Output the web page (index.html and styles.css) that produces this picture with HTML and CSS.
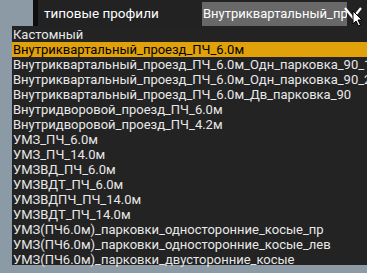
FILE: index.html
```html
<!DOCTYPE html>
<html lang="ru">
<head>
    <meta charset="UTF-8">
    <title>Типовые профили</title>
    <link rel="stylesheet" href="styles.css">
</head>
<body>
    <div class="toolbar">
        <div class="edge"></div>
        <span class="label">типовые профили</span>
        <div class="combo">
            <span class="combo-text">Внутриквартальный_проезд_ПЧ_6.0м</span>
            <svg class="chevron" width="20" height="20" viewBox="0 0 20 20">
                <path d="M2 5 L10 15 L18 5" fill="none" stroke="#ffffff" stroke-width="2.2"/>
                <path d="M10 8 L10 21 L13 18 L15.5 23 L17.5 22 L15 17 L19 17 Z" fill="#ffffff" stroke="#000000" stroke-width="1"/>
            </svg>
        </div>
    </div>

    <ul class="list">
        <li>Кастомный</li>
        <li class="selected">Внутриквартальный_проезд_ПЧ_6.0м</li>
        <li>Внутриквартальный_проезд_ПЧ_6.0м_Одн_парковка_90_1</li>
        <li>Внутриквартальный_проезд_ПЧ_6.0м_Одн_парковка_90_2</li>
        <li>Внутриквартальный_проезд_ПЧ_6.0м_Дв_парковка_90</li>
        <li>Внутридворовой_проезд_ПЧ_6.0м</li>
        <li>Внутридворовой_проезд_ПЧ_4.2м</li>
        <li>УМЗ_ПЧ_6.0м</li>
        <li>УМЗ_ПЧ_14.0м</li>
        <li>УМЗВД_ПЧ_6.0м</li>
        <li>УМЗВДТ_ПЧ_6.0м</li>
        <li>УМЗВДПЧ_ПЧ_14.0м</li>
        <li>УМЗВДТ_ПЧ_14.0м</li>
        <li>УМЗ(ПЧ6.0м)_парковки_односторонние_косые_пр</li>
        <li>УМЗ(ПЧ6.0м)_парковки_односторонние_косые_лев</li>
        <li>УМЗ(ПЧ6.0м)_парковки_двусторонние_косые</li>
    </ul>
</body>
</html>
```
FILE: styles.css
```css
* {
    margin: 0;
    padding: 0;
    box-sizing: border-box;
}

body {
    width: 367px;
    height: 273px;
    overflow: hidden;
    background-color: #8c9aa6;
    font-family: Roboto, "Noto Sans", sans-serif;
    font-size: 13px;
    color: #ffffff;
}

.toolbar {
    display: flex;
    align-items: center;
    height: 26px;
    margin-left: 33px;
    background-color: #222222;
}

.edge {
    width: 5px;
    height: 100%;
    background-color: #0e0e0e;
}

.label {
    margin-left: 6px;
    width: 158px;
    font-size: 13.5px;
}

.combo {
    display: flex;
    align-items: center;
    height: 24px;
    margin-top: 2px;
    flex: 1;
}

.combo-text {
    background-color: #686868;
    height: 24px;
    line-height: 24px;
    width: 145px;
    padding-left: 1px;
    overflow: hidden;
    white-space: nowrap;
}

.chevron {
    margin-left: -4px;
    margin-top: -2px;
    overflow: visible;
}

.list {
    list-style: none;
    margin-left: 12px;
    height: 239px;
    background-color: #232323;
    padding-top: 1px;
}

.list li {
    height: 15px;
    line-height: 15px;
    padding-left: 1px;
    white-space: nowrap;
    overflow: hidden;
    color: #e8e8e8;
}

.list li.selected {
    background-color: #e0a10a;
    color: #000000;
}
```
